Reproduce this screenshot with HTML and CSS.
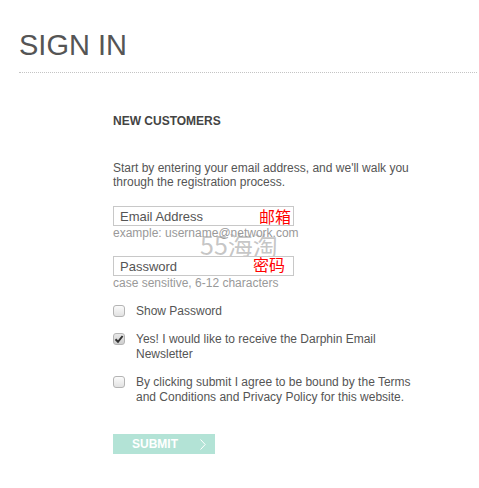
FILE: index.html
```html
<!DOCTYPE html>
<html lang="en">
<head>
    <meta charset="UTF-8">
    <meta name="viewport" content="width=device-width, initial-scale=1.0">
    <title>Sign In</title>
    <link rel="stylesheet" href="styles.css">
</head>
<body>
    <div class="page">
        <div class="page-header">
            <h1>SIGN IN</h1>
        </div>

        <form class="signup" id="signupForm">
            <h2>NEW CUSTOMERS</h2>
            <p class="intro">Start by entering your email address, and we'll walk you through the registration process.</p>

            <div class="field field-email">
                <input type="email" name="email" placeholder="Email Address">
                <span class="note">邮箱</span>
            </div>
            <div class="hint">example: username@network.com</div>
            <div class="watermark">55海淘</div>

            <div class="field field-pass">
                <input type="password" name="password" placeholder="Password">
                <span class="note">密码</span>
            </div>
            <div class="hint">case sensitive, 6-12 characters</div>

            <div class="checks">
                <label class="check">
                    <span class="cbox"></span>
                    <span class="check-text">Show Password</span>
                </label>
                <label class="check">
                    <span class="cbox checked">
                        <svg width="10" height="10" viewBox="0 0 10 10"><path d="M1.5 5.2 L4 7.8 L8.6 2" fill="none" stroke="#333" stroke-width="2"/></svg>
                    </span>
                    <span class="check-text">Yes! I would like to receive the Darphin Email Newsletter</span>
                </label>
                <label class="check">
                    <span class="cbox"></span>
                    <span class="check-text">By clicking submit I agree to be bound by the Terms and Conditions and Privacy Policy for this website.</span>
                </label>
            </div>

            <button type="submit" class="submit">
                <span>SUBMIT</span>
                <svg width="6" height="11" viewBox="0 0 6 11"><path d="M0.5 0.5 L5.2 5.5 L0.5 10.5" fill="none" stroke="#fff" stroke-width="1"/></svg>
            </button>
        </form>
    </div>
</body>
</html>
```

FILE: styles.css
```css
* {
    margin: 0;
    padding: 0;
    box-sizing: border-box;
}

body {
    font-family: "Liberation Sans", Arial, sans-serif;
    background: #fff;
    color: #555;
}

.page {
    padding: 28px 2px 0 19px;
}

.page-header {
    padding-bottom: 10px;
    border-bottom: 1px dotted #c4c4c4;
}

.page-header h1 {
    font-size: 29px;
    line-height: 34px;
    font-weight: normal;
    color: #555;
}

.signup {
    position: relative;
    width: 310px;
    margin-left: 94px;
    padding-top: 41px;
}

.signup h2 {
    font-size: 12px;
    line-height: 15px;
    font-weight: bold;
    color: #444;
}

.intro {
    margin-top: 32px;
    font-size: 12px;
    line-height: 14px;
}

.field {
    position: relative;
    width: 181px;
    margin-top: 16px;
}

.field-email {
    margin-top: 17px;
}

.field input {
    display: block;
    width: 100%;
    height: 20px;
    border: 1px solid #c8c8c8;
    padding: 0 6px;
    font-family: "Liberation Sans", Arial, sans-serif;
    font-size: 13px;
    color: #555;
    outline: none;
}

.field input::placeholder {
    color: #555;
}

.note {
    position: absolute;
    right: 3px;
    top: 1px;
    font-family: "Noto Sans CJK SC", sans-serif;
    font-size: 16px;
    line-height: 18px;
    color: #f00;
}

.field-pass .note {
    right: 9px;
    top: -1px;
}

.hint {
    font-size: 12px;
    line-height: 14px;
    color: #999;
}

.watermark {
    position: absolute;
    left: 87px;
    top: 158px;
    font-family: "Noto Sans CJK SC", sans-serif;
    font-size: 25px;
    line-height: 26px;
    font-weight: normal;
    color: rgba(160, 160, 160, 0.6);
    pointer-events: none;
}

.checks {
    display: flex;
    flex-direction: column;
    gap: 13px;
    margin-top: 14px;
}

.check {
    display: flex;
    align-items: flex-start;
    gap: 11px;
    font-size: 12px;
    line-height: 15px;
    cursor: pointer;
}

.cbox {
    flex: none;
    display: flex;
    align-items: center;
    justify-content: center;
    width: 12px;
    height: 12px;
    margin-top: 1px;
    border: 1px solid #b4b4b4;
    border-radius: 3px;
    background: linear-gradient(#fbfbfb, #e2e2e2);
}

.cbox.checked {
    background: linear-gradient(#e8e8e8, #cfcfcf);
}

.check-text {
    color: #555;
}

.submit {
    display: flex;
    align-items: center;
    justify-content: space-between;
    width: 102px;
    height: 20px;
    margin-top: 29px;
    padding: 0 9px 0 19px;
    background: #b3e3d6;
    border: none;
    color: #fff;
    font-family: "Liberation Sans", Arial, sans-serif;
    font-size: 12px;
    font-weight: bold;
    cursor: pointer;
}
```
